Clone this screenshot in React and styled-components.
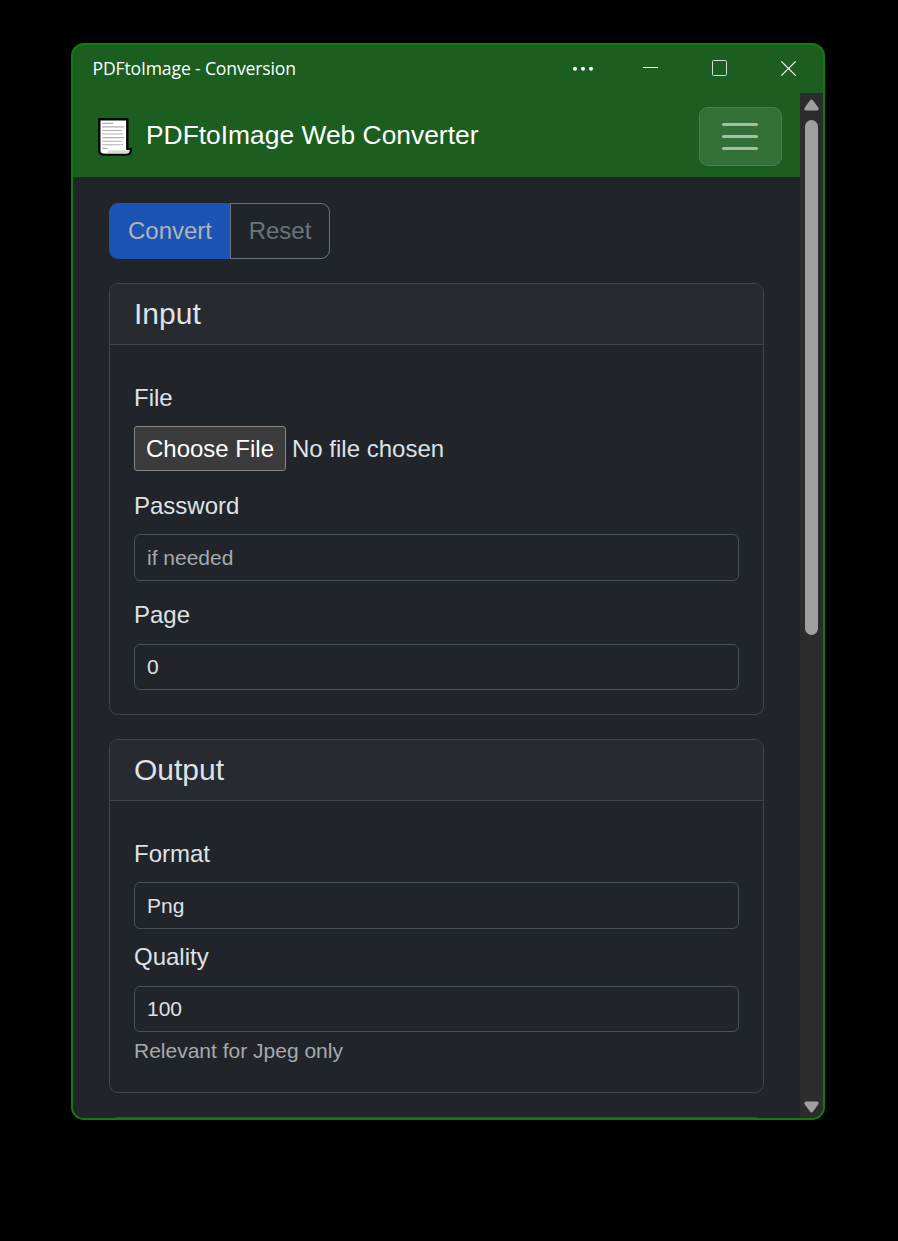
import React from "react";
import styled, { createGlobalStyle } from "styled-components";

const GlobalStyle = createGlobalStyle`
  * { box-sizing: border-box; }
  body { margin: 0; background: #000; }
`;

const Desktop = styled.div`
  height: 1241px;
  padding: 43px 73px 0 71px;
  background: #000;
  color: #dee2e6;
  font: 24px/36px "Liberation Sans", Arial, sans-serif;
`;

const Window = styled.div`
  display: flex;
  flex-direction: column;
  height: 1077px;
  border: 2px solid #107c10;
  border-radius: 13px;
  background: #1b5e20;
  overflow: hidden;
`;

const TitleBar = styled.header`
  display: flex;
  align-items: center;
  justify-content: space-between;
  flex: none;
  height: 48px;
  padding-left: 19.5px;
  color: #fff;
`;

const WindowTitle = styled.span`
  padding-bottom: 2px;
  font: 17.6px/24px "Open Sans", "Noto Sans", sans-serif;
  letter-spacing: -0.16px;
  white-space: nowrap;
`;

const WindowControls = styled.svg`
  display: block;
  flex: none;
`;

const Viewport = styled.div`
  display: flex;
  flex: 1;
  min-height: 0;
`;

const Page = styled.div`
  flex: 1;
  min-width: 0;
  overflow: hidden;
  background: #212529;
`;

const Navbar = styled.nav`
  display: flex;
  align-items: center;
  height: 84px;
  padding: 0 18px 0 22px;
  background: #1b5e20;
`;

const Brand = styled.div`
  display: flex;
  align-items: center;
  flex: 1;
  gap: 12px;
  color: #fff;
  font-size: 26.4px;
  white-space: nowrap;
`;

const Toggler = styled.button`
  display: flex;
  flex-direction: column;
  align-items: center;
  justify-content: center;
  gap: 9px;
  width: 83px;
  height: 59px;
  margin-top: 3px;
  padding: 0 1px 0 0;
  border: 1px solid #497f4d;
  border-radius: 9px;
  background: #337038;
`;

const TogglerLine = styled.span`
  width: 36px;
  height: 3px;
  border-radius: 1.5px;
  background: #a4bfa6;
`;

const Main = styled.main`
  display: flex;
  flex-direction: column;
  gap: 24px;
  padding: 26px 36px 0;
`;

const ButtonGroup = styled.div`
  display: flex;
`;

const Button = styled.button`
  height: 56px;
  width: ${(p) => (p.$primary ? "122px" : "100px")};
  padding: 0;
  border: 1px solid ${(p) => (p.$primary ? "#1b54b4" : "#6c757d")};
  border-radius: ${(p) => (p.$primary ? "9px 0 0 9px" : "0 9px 9px 0")};
  margin-left: ${(p) => (p.$primary ? "0" : "-1px")};
  background: ${(p) => (p.$primary ? "#1b54b4" : "transparent")};
  color: ${(p) => (p.$primary ? "#b1b3b6" : "#6c757d")};
  font: inherit;
`;

const Card = styled.section`
  height: ${(p) => p.$height}px;
  flex: none;
  border: 1px solid #424649;
  border-radius: 9px;
  overflow: hidden;
`;

const CardHeader = styled.h2`
  height: ${(p) => p.$height}px;
  margin: 0;
  padding: 12px 24px;
  border-bottom: 1px solid #424649;
  background: #272b2f;
  font-size: 30px;
  font-weight: 400;
  line-height: 36px;
`;

const CardBody = styled.div`
  padding: 35px 24px 0;
`;

const Field = styled.div`
  margin-bottom: ${(p) => p.$after}px;
`;

const Label = styled.label`
  display: block;
  margin-bottom: ${(p) => p.$gap || 10}px;
`;

const TextInput = styled.input`
  display: block;
  width: 100%;
  height: ${(p) => p.$height || 46}px;
  padding: 0 12px;
  border: 1px solid #495057;
  border-radius: 6px;
  outline: none;
  background: #212529;
  color: #dee2e6;
  font: 21px "Liberation Sans", Arial, sans-serif;
  &::placeholder { color: #a6aaae; opacity: 1; }
`;

const FileRow = styled.div`
  display: flex;
  align-items: center;
  gap: 6px;
  height: 45px;
`;

const FileButton = styled.button`
  width: 152px;
  height: 45px;
  padding: 0;
  border: 1px solid #858585;
  border-radius: 3px;
  background: #3b3b3b;
  color: #fff;
  font: inherit;
`;

const HelpText = styled.div`
  padding-top: 3px;
  color: #a6aaae;
  font-size: 21px;
  line-height: 32px;
`;

const Scrollbar = styled.div`
  display: flex;
  flex-direction: column;
  align-items: center;
  width: 23px;
  padding: 6px 0 5px;
  background: #2c2c2c;
`;

const Arrow = styled.svg`
  display: block;
  flex: none;
  fill: #9f9f9f;
`;

const Track = styled.div`
  flex: 1;
  padding-top: 9px;
`;

const Thumb = styled.div`
  width: 13px;
  height: 515px;
  border-radius: 6.5px;
  background: #9f9f9f;
`;

const ScrollIcon = () => (
  <svg width="39" height="42" viewBox="0 0 39 42">
    <path
      d="M4.3 5.2H32.3V34.9H35.8V36.5Q35.8 40.6 31.6 40.6H8.6Q4.3 40.6 4.3 36.5Z"
      fill="#fff"
      stroke="#050805"
      strokeWidth="2.4"
      strokeLinejoin="round"
    />
    <path d="M13.5 36.2H34.6Q34 39.4 31 39.4H9.5Q12.8 39 13.5 36.2Z" fill="#dcdcdc" />
    <path
      d="M7.3 9.4H18.3M7.3 12.9H29.3M7.3 16.5H26.8M7.3 20H28M7.3 23.6H29M7.3 27.2H26.8M7.3 30.8H28M7.3 34.4H12.5"
      stroke="#b0b0b0"
      strokeWidth="1.1"
    />
  </svg>
);

export default function App() {
  return (
    <>
      <GlobalStyle />
      <Desktop>
        <Window>
          <TitleBar>
            <WindowTitle>PDFtoImage - Conversion</WindowTitle>
            <WindowControls width="273" height="48" fill="none" stroke="#fff">
              <g fill="#fff" stroke="none">
                <circle cx="25" cy="23.7" r="2" />
                <circle cx="33" cy="23.7" r="2" />
                <circle cx="41" cy="23.7" r="2" />
              </g>
              <path d="M93 22.5H108" />
              <rect x="162.5" y="15.5" width="14" height="15" rx="1" stroke="#d3e0d4" />
              <path d="M231.3 16.3L245.7 30.7M245.7 16.3L231.3 30.7" strokeWidth="1.2" />
            </WindowControls>
          </TitleBar>
          <Viewport>
            <Page>
              <Navbar>
                <Brand>
                  <ScrollIcon />
                  PDFtoImage Web Converter
                </Brand>
                <Toggler aria-label="Menu">
                  <TogglerLine />
                  <TogglerLine />
                  <TogglerLine />
                </Toggler>
              </Navbar>
              <Main>
                <ButtonGroup>
                  <Button $primary>Convert</Button>
                  <Button>Reset</Button>
                </ButtonGroup>
                <Card $height={432}>
                  <CardHeader $height={61}>Input</CardHeader>
                  <CardBody>
                    <Field $after={17}>
                      <Label>File</Label>
                      <FileRow>
                        <FileButton>Choose File</FileButton>
                        <span>No file chosen</span>
                      </FileRow>
                    </Field>
                    <Field $after={16}>
                      <Label>Password</Label>
                      <TextInput $height={47} placeholder="if needed" />
                    </Field>
                    <Field $after={24}>
                      <Label $gap={11}>Page</Label>
                      <TextInput defaultValue="0" />
                    </Field>
                  </CardBody>
                </Card>
                <Card $height={354}>
                  <CardHeader $height={61}>Output</CardHeader>
                  <CardBody>
                    <Field $after={10}>
                      <Label>Format</Label>
                      <TextInput $height={47} defaultValue="Png" />
                    </Field>
                    <Field $after={0}>
                      <Label $gap={11}>Quality</Label>
                      <TextInput defaultValue="100" />
                      <HelpText>Relevant for Jpeg only</HelpText>
                    </Field>
                  </CardBody>
                </Card>
                <Card $height={100} />
              </Main>
            </Page>
            <Scrollbar>
              <Arrow width="15" height="12" viewBox="0 0 15 12">
                <path d="M6.3 1Q7.5 0 8.7 1L14.5 9Q15 11.5 13 11.5H2Q0 11.5 .5 9Z" />
              </Arrow>
              <Track>
                <Thumb />
              </Track>
              <Arrow width="15" height="12" viewBox="0 0 15 12">
                <path d="M6.3 11Q7.5 12 8.7 11L14.5 3Q15 .5 13 .5H2Q0 .5 .5 3Z" />
              </Arrow>
            </Scrollbar>
          </Viewport>
        </Window>
      </Desktop>
    </>
  );
}
